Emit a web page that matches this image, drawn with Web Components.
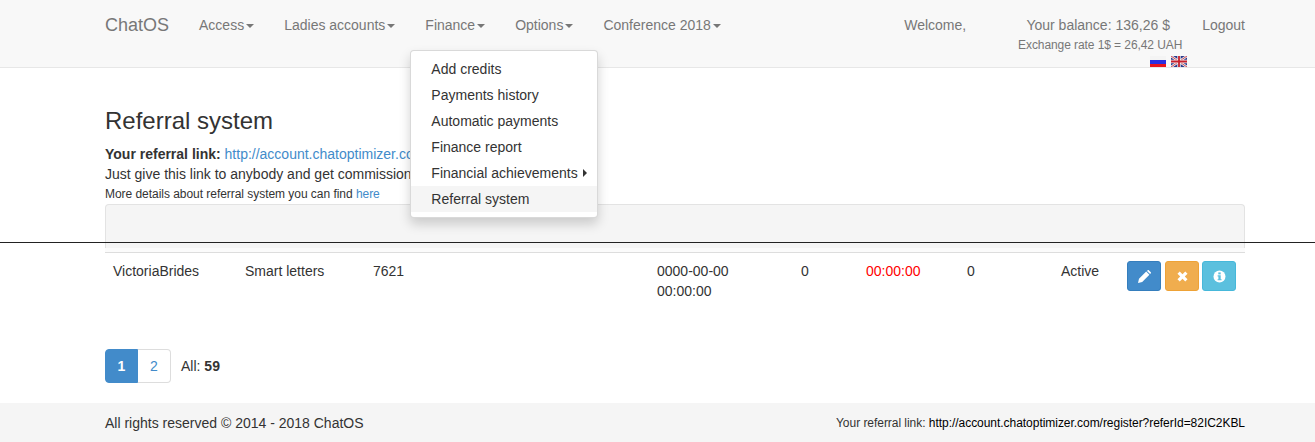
<!DOCTYPE html>
<html>
<head>
<meta charset="utf-8">
<title>Referral system</title>
<style>
    html, body { margin: 0; padding: 0; }
    body {
        font: 14px/20px "Liberation Sans", Arial, sans-serif;
        color: #333;
        background: #fff;
        overflow: hidden;
    }
    main { display: block; padding: 0 70px 0 105px; }
</style>
</head>
<body>
<chat-navbar>
    <nav-item>Access</nav-item>
    <nav-item>Ladies accounts</nav-item>
    <nav-item>Finance<nav-menu slot="menu">
            <menu-item>Add credits</menu-item>
            <menu-item>Payments history</menu-item>
            <menu-item>Automatic payments</menu-item>
            <menu-item>Finance report</menu-item>
            <menu-item submenu>Financial achievements</menu-item>
            <menu-item active>Referral system</menu-item>
        </nav-menu></nav-item>
    <nav-item>Options</nav-item>
    <nav-item>Conference 2018</nav-item>
</chat-navbar>
<main>
    <referral-intro></referral-intro>
    <empty-well></empty-well>
    <ref-table>
        <ref-row></ref-row>
    </ref-table>
    <page-nav></page-nav>
</main>
<chat-footer></chat-footer>
<stitch-line></stitch-line>

<script>
class ChatNavbar extends HTMLElement {
    constructor() {
        super();
        this.attachShadow({ mode: 'open' });
        this.shadowRoot.innerHTML = `
            <style>
                :host {
                    display: flex;
                    height: 67px;
                    padding: 0 70px 0 105px;
                    background: #f8f8f8;
                    border-bottom: 1px solid #e7e7e7;
                    color: #777;
                }
                .brand { font-size: 18px; line-height: 20px; padding: 15px 15px 0 0; }
                .items { display: flex; align-items: flex-start; }
                .right { display: flex; margin-left: auto; align-items: flex-start; }
                .welcome { padding-top: 15px; margin-right: 44px; }
                .money { width: 176px; margin-right: 16px; text-align: center; }
                .balance { padding-top: 15px; }
                .rate { font-size: 12px; line-height: 17px; margin-top: 2px; padding-left: 4px; letter-spacing: -.08px; }
                .flags { display: flex; justify-content: flex-end; gap: 5px; margin-right: -1px; height: 11px; margin-top: 2px; }
                .flags svg { display: block; }
                .logout { padding-top: 15px; }
            </style>
            <div class="brand">ChatOS</div>
            <div class="items"><slot></slot></div>
            <div class="right">
                <div class="welcome">Welcome,</div>
                <div class="money">
                    <div class="balance">Your balance: 136,26 $</div>
                    <div class="rate">Exchange rate 1$ = 26,42 UAH</div>
                    <div class="flags">
                        <svg width="16" height="11" viewBox="0 0 16 11">
                            <rect width="16" height="4" fill="#f4f4f4"/>
                            <rect y="4" width="16" height="4" fill="#2a2ee0"/>
                            <rect y="8" width="16" height="3" fill="#e8141c"/>
                        </svg>
                        <svg width="16" height="11" viewBox="0 0 16 11">
                            <rect width="16" height="11" fill="#2b3a8c"/>
                            <path d="M0 0L16 11M16 0L0 11" stroke="#eee" stroke-width="2.4"/>
                            <path d="M0 0L16 11M16 0L0 11" stroke="#c8202c" stroke-width=".8"/>
                            <path d="M8 0V11M0 5.5H16" stroke="#eee" stroke-width="3.4"/>
                            <path d="M8 0V11M0 5.5H16" stroke="#c8202c" stroke-width="1.8"/>
                        </svg>
                    </div>
                </div>
                <div class="logout">Logout</div>
            </div>
        `;
    }
}

class NavItem extends HTMLElement {
    constructor() {
        super();
        this.attachShadow({ mode: 'open' });
        this.shadowRoot.innerHTML = `
            <style>
                :host { display: block; position: relative; padding: 15px 15px; white-space: nowrap; }
                .caret {
                    display: inline-block;
                    width: 0; height: 0;
                    margin-left: 2px;
                    vertical-align: middle;
                    border-top: 4px solid #777;
                    border-left: 4px solid transparent;
                    border-right: 4px solid transparent;
                }
            </style>
            <slot></slot><span class="caret"></span><slot name="menu"></slot>
        `;
    }
}

class NavMenu extends HTMLElement {
    constructor() {
        super();
        this.attachShadow({ mode: 'open' });
        this.shadowRoot.innerHTML = `
            <style>
                :host {
                    display: block;
                    position: absolute;
                    top: 50px;
                    left: 0;
                    width: 186px;
                    padding: 5px 0;
                    background: #fff;
                    border: 1px solid rgba(0, 0, 0, .15);
                    border-radius: 4px;
                    box-shadow: 0 6px 12px rgba(0, 0, 0, .175);
                    color: #333;
                    z-index: 10;
                }
            </style>
            <slot></slot>
        `;
    }
}

class MenuItem extends HTMLElement {
    constructor() {
        super();
        this.attachShadow({ mode: 'open' });
        this.shadowRoot.innerHTML = `
            <style>
                :host { display: flex; align-items: center; height: 26px; padding: 0 10px 0 20px; }
                :host([active]) { background: #f5f5f5; }
                .arrow { display: none; }
                :host([submenu]) .arrow {
                    display: block;
                    margin-left: auto;
                    border-left: 4px solid #333;
                    border-top: 4px solid transparent;
                    border-bottom: 4px solid transparent;
                }
            </style>
            <slot></slot><span class="arrow"></span>
        `;
    }
}

class ReferralIntro extends HTMLElement {
    constructor() {
        super();
        this.attachShadow({ mode: 'open' });
        this.shadowRoot.innerHTML = `
            <style>
                :host { display: block; padding-top: 40px; }
                h3 { margin: 0 0 10px; font-size: 24px; font-weight: 500; line-height: 26px; }
                a { color: #428bca; text-decoration: none; }
                small { display: block; font-size: 12px; line-height: 20px; letter-spacing: -.04px; }
            </style>
            <h3>Referral system</h3>
            <div><b>Your referral link:</b> <a href="#">http://account.chatoptimizer.com/register?referId=82IC2KBL</a></div>
            <div>Just give this link to anybody and get commission from all their payments</div>
            <small>More details about referral system you can find <a href="#">here</a></small>
        `;
    }
}

class EmptyWell extends HTMLElement {
    constructor() {
        super();
        this.attachShadow({ mode: 'open' });
        this.shadowRoot.innerHTML = `
            <style>
                :host {
                    display: block;
                    height: 44px;
                    background: #f5f5f5;
                    border: 1px solid #e3e3e3;
                    border-bottom: 0;
                    border-radius: 4px 4px 0 0;
                    box-sizing: border-box;
                }
            </style>
        `;
    }
}

class RefTable extends HTMLElement {
    constructor() {
        super();
        this.attachShadow({ mode: 'open' });
        this.shadowRoot.innerHTML = `
            <style>
                :host { display: block; }
                .band { height: 4px; margin-right: 1px; background: #fbfbfb; border-bottom: 1px solid #ddd; margin-right: 0; }
            </style>
            <div class="band"></div>
            <slot></slot>
        `;
    }
}

class RefRow extends HTMLElement {
    constructor() {
        super();
        this.attachShadow({ mode: 'open' });
        this.shadowRoot.innerHTML = `
            <style>
                :host {
                    display: grid;
                    grid-template-columns: 132px 128px 284px 144px 65px 101px 94px 66px 126px;
                    height: 76px;
                }
                div { padding: 8px; }
                .late { color: #f00; }
                .actions { display: flex; gap: 4px; align-items: flex-start; }
                button {
                    display: flex; align-items: center; justify-content: center;
                    width: 34px; height: 30px; padding: 0;
                    border: 1px solid; border-radius: 3px;
                }
                .blue { background: #428bca; border-color: #357ebd; }
                .orange { background: #f0ad4e; border-color: #eea236; }
                .cyan { background: #5bc0de; border-color: #46b8da; margin-left: -1px; }
            </style>
            <div>VictoriaBrides</div>
            <div>Smart letters</div>
            <div>7621</div>
            <div>0000-00-00 00:00:00</div>
            <div>0</div>
            <div class="late">00:00:00</div>
            <div>0</div>
            <div>Active</div>
            <div class="actions">
                <button class="blue"><svg width="13" height="13" viewBox="0 0 13 13"><path fill="#fff" d="M0 13l1-4.2L8.2 1.6l3.2 3.2L4.2 12zM9 .9L9.7.2c.3-.3.8-.3 1.1 0l2 2c.3.3.3.8 0 1.1l-.7.7z"/></svg></button>
                <button class="orange"><svg width="11" height="11" viewBox="0 0 11 11"><path fill="none" stroke="#fff" stroke-width="3.2" d="M1.6 1.6l7.8 7.8M9.4 1.6l-7.8 7.8"/></svg></button>
                <button class="cyan"><svg width="13" height="13" viewBox="0 0 13 13"><circle cx="6.5" cy="6.5" r="6" fill="#fff"/><rect x="5.3" y="2.4" width="2.4" height="2" fill="#5bc0de"/><path fill="#5bc0de" d="M4.6 5.3h3.1v3.9h.9v1.1H4.6V9.2h.8V6.4h-.8z"/></svg></button>
            </div>
        `;
    }
}

class PageNav extends HTMLElement {
    constructor() {
        super();
        this.attachShadow({ mode: 'open' });
        this.shadowRoot.innerHTML = `
            <style>
                :host { display: flex; align-items: center; height: 34px; margin-top: 20px; }
                a {
                    display: block;
                    box-sizing: border-box;
                    width: 33px; height: 34px;
                    line-height: 32px;
                    text-align: center;
                    text-decoration: none;
                    border: 1px solid #ddd;
                    color: #428bca;
                }
                .on {
                    background: #428bca; border-color: #428bca; color: #fff; font-weight: bold;
                    border-radius: 4px 0 0 4px;
                }
                .last { border-left: 0; border-radius: 0 4px 4px 0; }
                span { margin-left: 10px; }
            </style>
            <a class="on" href="#">1</a><a class="last" href="#">2</a>
            <span>All: <b>59</b></span>
        `;
    }
}

class ChatFooter extends HTMLElement {
    constructor() {
        super();
        this.attachShadow({ mode: 'open' });
        this.shadowRoot.innerHTML = `
            <style>
                :host {
                    display: flex;
                    justify-content: space-between;
                    align-items: center;
                    height: 39px;
                    margin-top: 20px;
                    padding: 0 70px 0 105px;
                    background: #f5f5f5;
                }
                .ref { font-size: 12px; letter-spacing: -.04px; }
                .ref span { color: #000; }
            </style>
            <div>All rights reserved © 2014 - 2018 ChatOS</div>
            <div class="ref">Your referral link: <span>http://account.chatoptimizer.com/register?referId=82IC2KBL</span></div>
        `;
    }
}

// the reference has a stray 1px black rule across the page, over everything
class StitchLine extends HTMLElement {
    constructor() {
        super();
        this.attachShadow({ mode: 'open' });
        this.shadowRoot.innerHTML = `
            <style>
                :host { display: block; position: absolute; top: 242px; left: 0; right: 0; height: 1px; background: #222; }
            </style>
        `;
    }
}

customElements.define('chat-navbar', ChatNavbar);
customElements.define('nav-item', NavItem);
customElements.define('nav-menu', NavMenu);
customElements.define('menu-item', MenuItem);
customElements.define('referral-intro', ReferralIntro);
customElements.define('empty-well', EmptyWell);
customElements.define('ref-table', RefTable);
customElements.define('ref-row', RefRow);
customElements.define('page-nav', PageNav);
customElements.define('chat-footer', ChatFooter);
customElements.define('stitch-line', StitchLine);
</script>
</body>
</html>
